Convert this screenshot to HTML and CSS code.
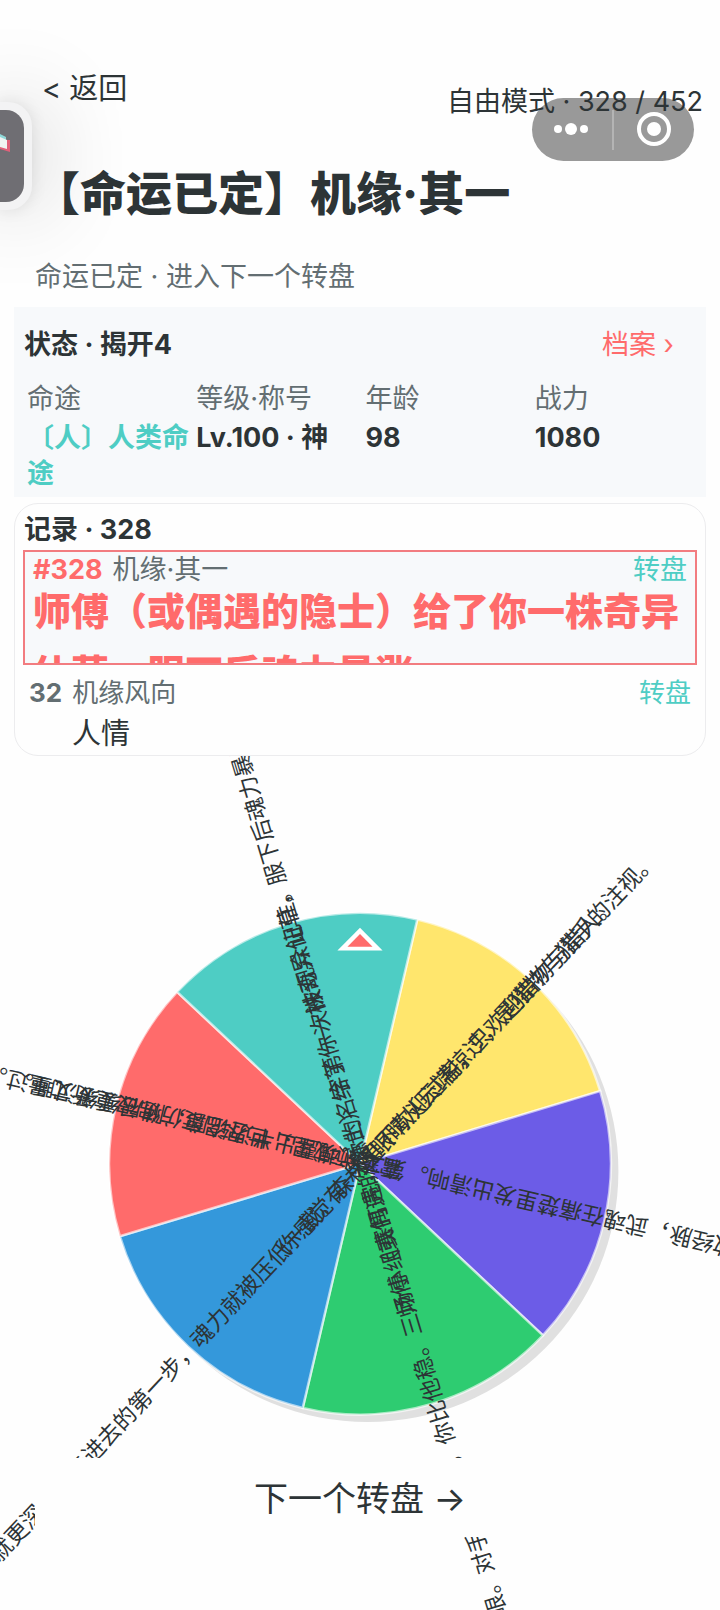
FILE: index.html
```html
<!DOCTYPE html>
<html lang="zh-CN">
<head>
    <meta charset="UTF-8">
    <meta name="viewport" content="width=device-width, initial-scale=1.0">
    <title>机缘·其一</title>
    <link rel="stylesheet" href="styles.css">
</head>
<body>
    <!-- Floating app shortcut -->
    <div class="floater">
        <svg viewBox="0 0 24 92" width="24" height="92" aria-hidden="true">
            <path d="M0 24 L6 27 V36 L0 34 Z" fill="#8fd8d8"/>
            <path d="M6 30 H10 V42 L0 39 V34 Z" fill="#e0607a"/>
            <path d="M0 27 L7 30 V39 L0 37 Z" fill="#f1f3f3"/>
        </svg>
    </div>

    <!-- Mini program capsule -->
    <div class="capsule">
        <svg viewBox="0 0 162 63" width="162" height="63" aria-hidden="true">
            <g fill="#fff">
                <circle cx="26" cy="31" r="4"/>
                <circle cx="39" cy="31" r="6"/>
                <circle cx="52" cy="31" r="4"/>
                <circle cx="122" cy="31" r="7"/>
            </g>
            <path d="M81 12 V52" stroke="#b4b4b4" stroke-width="2"/>
            <circle cx="122" cy="31" r="15" fill="none" stroke="#fff" stroke-width="4"/>
        </svg>
    </div>

    <header class="top">
        <button class="back" type="button">&lt; 返回</button>
        <span class="mode">自由模式 · 328 / 452</span>
    </header>

    <main>
        <h1>【命运已定】机缘·其一</h1>
        <p class="hint">命运已定 · 进入下一个转盘</p>

        <!-- Status -->
        <section class="status">
            <div class="status-head">
                <h2>状态 · 揭开4</h2>
                <a href="#archive">档案 ›</a>
            </div>
            <dl class="stats">
                <div><dt>命途</dt><dd class="path">〔人〕人类命途</dd></div>
                <div><dt>等级·称号</dt><dd>Lv.100 · 神</dd></div>
                <div><dt>年龄</dt><dd>98</dd></div>
                <div><dt>战力</dt><dd>1080</dd></div>
            </dl>
        </section>

        <!-- Log -->
        <section class="log">
            <h2>记录 · 328</h2>
            <article class="entry latest">
                <div class="entry-head">
                    <b>#328</b>
                    <span>机缘·其一</span>
                    <em>转盘</em>
                </div>
                <p>师傅（或偶遇的隐士）给了你一株奇异仙草，服下后魂力暴涨</p>
            </article>
            <article class="entry">
                <div class="entry-head">
                    <b>32</b>
                    <span>机缘风向</span>
                    <em>转盘</em>
                </div>
                <p>人情</p>
            </article>
        </section>

        <!-- Wheel -->
        <section class="stage">
            <svg class="wheel" viewBox="-287 -325 574 560">
                <circle class="wheel-shadow" cx="6" cy="6" r="200"/>
                <g class="slices" transform="rotate(13.2)">
                    <path fill="#ffe66d" d="M0 0 L0 -200 A200 200 0 0 1 173.2 -100 Z"/>
                    <path fill="#6c5ce7" d="M0 0 L173.2 -100 A200 200 0 0 1 173.2 100 Z"/>
                    <path fill="#2ecc71" d="M0 0 L173.2 100 A200 200 0 0 1 0 200 Z"/>
                    <path fill="#3498db" d="M0 0 L0 200 A200 200 0 0 1 -173.2 100 Z"/>
                    <path fill="#ff6b6b" d="M0 0 L-173.2 100 A200 200 0 0 1 -173.2 -100 Z"/>
                    <path fill="#4ecdc4" d="M0 0 L-173.2 -100 A200 200 0 0 1 0 -200 Z"/>
                </g>
                <g class="labels">
                    <g transform="rotate(-106.8)">
                        <text x="-128" y="1">师傅（或偶遇的隐士）给了你一株奇异仙草，服下后魂力暴涨。</text>
                        <text x="-378" y="1">眼。对手比你快，你比他稳。三场小组赛打完，你的名字第一次被观众记住。</text>
                    </g>
                    <g transform="rotate(-46.8)">
                        <text x="-93" y="1">你感觉有一双眼睛从云端掠过，是猎物与猎手的注视。</text>
                        <text x="-429" y="1">就更深。你走进去的第一步，魂力就被压低一截。森林里不欢迎过客，只欢迎猎物与猎人。</text>
                    </g>
                    <g transform="rotate(-166.8)">
                        <text x="-307" y="1">散经脉，武魂在痛楚里发出清响。第二武魂露出半边轮廓，随后缓缓沉睡。</text>
                        <text x="-34" y="1">雷霆领域里，世界温度仿佛被重新丈量过。</text>
                    </g>
                </g>
                <path class="pointer-edge" d="M0 -188 L18 -170 H-18 Z"/>
                <path class="pointer" d="M0 -183 L10 -173 H-10 Z"/>
            </svg>
        </section>

        <button class="next" type="button">下一个转盘 →</button>
    </main>
</body>
</html>
```

FILE: styles.css
```css
* {
    box-sizing: border-box;
}

body {
    margin: 0;
    min-height: 100vh;
    overflow: hidden;
    position: relative;
    background: #fefefe;
    color: #2d3436;
    font-family: Inter, "Noto Sans CJK SC", sans-serif;
    font-size: 27px;
    line-height: 36px;
}

h1, h2, p, dl, dd {
    margin: 0;
}

button {
    border: none;
    background: none;
    color: inherit;
    font-family: inherit;
    cursor: pointer;
}

/* Overlays */
.floater {
    position: absolute;
    top: 102px;
    left: 0;
    width: 32px;
    height: 108px;
    padding: 8px 8px 8px 0;
    background: #f3f3f4;
    border-radius: 0 24px 24px 0;
    box-shadow: 0 0 90px rgba(0, 0, 0, 0.3), 0 0 16px rgba(0, 0, 0, 0.1);
}

.floater svg {
    display: block;
    background: #6f6e73;
    border-radius: 0 18px 18px 0;
}

.capsule {
    position: absolute;
    top: 98px;
    right: 26px;
    height: 63px;
    background: #999;
    border-radius: 32px;
}

.capsule svg {
    display: block;
}

/* Header */
.top {
    position: relative;
    display: flex;
    justify-content: space-between;
    align-items: flex-start;
    padding: 71px 17px 0 36px;
}

.back {
    padding: 0 6px;
    font-size: 29px;
    line-height: 36px;
}

.mode {
    padding-top: 13px;
}

main {
    position: relative;
    padding: 0 14px;
}

h1 {
    padding: 41px 20px 0;
    font-size: 46px;
    font-weight: 800;
    line-height: 64px;
}

.hint {
    padding: 34px 21px 12px;
    color: #636e72;
}

h2 {
    font-size: 27px;
    font-weight: 700;
}

/* Status */
.status {
    padding: 20px 10px 5px;
    background: #f7f9fb;
}

.status-head {
    display: flex;
    justify-content: space-between;
    padding-right: 22px;
}

.status-head a {
    color: #ff6b6b;
    text-decoration: none;
}

.stats {
    display: grid;
    grid-template-columns: repeat(4, 1fr);
    margin-right: -8px;
    padding: 18px 0 0 3px;
}

.stats dt {
    color: #636e72;
}

.stats dd {
    padding-top: 3px;
    font-weight: 700;
}

.stats .path {
    color: #4ecdc4;
}

/* Log */
.log {
    position: relative;
    z-index: 1;
    height: 253px;
    margin-top: 6px;
    padding: 8px 8px 0;
    background: #fefefe;
    border: 1px solid #ececee;
    border-radius: 24px;
}

.log h2 {
    padding: 0 1px 2px;
}

.entry {
    padding: 10px 6px 0;
}

.entry-head {
    display: flex;
    gap: 10px;
    font-size: 26px;
    line-height: 36px;
    color: #636e72;
}

.entry-head em {
    margin-left: auto;
    color: #4ecdc4;
    font-style: normal;
}

.entry p {
    padding: 5px 0 0 43px;
    font-size: 29px;
}

.latest {
    height: 115px;
    padding: 8px 8px 0;
    overflow: hidden;
    background: #f7f9fb;
    border: 2px solid #f27c80;
}

.latest .entry-head {
    font-size: 27px;
    line-height: 20px;
}

.latest b {
    color: #ff6b6b;
}

.latest p {
    padding: 0;
    color: #ff6b6b;
    font-size: 38px;
    font-weight: 800;
    line-height: 62px;
}

/* Wheel */
.stage {
    margin: 0 -14px;
}

.wheel {
    display: block;
    width: 100%;
    overflow: visible;
}

.wheel-shadow {
    fill: #e0e0e0;
}

.slices path {
    stroke: rgba(255, 255, 255, 0.6);
    stroke-width: 2;
}

.labels text {
    fill: #2d3436;
    font-family: "Noto Sans CJK SC", sans-serif;
    font-size: 18px;
    dominant-baseline: central;
}

.pointer-edge {
    fill: #fff;
}

.pointer {
    fill: #ff6b6b;
}

.next {
    position: relative;
    display: block;
    width: calc(100% - 42px);
    margin: 0 auto;
    padding: 17px 0 15px;
    background: #fefefe;
    font-size: 34px;
    line-height: 47px;
}
```
